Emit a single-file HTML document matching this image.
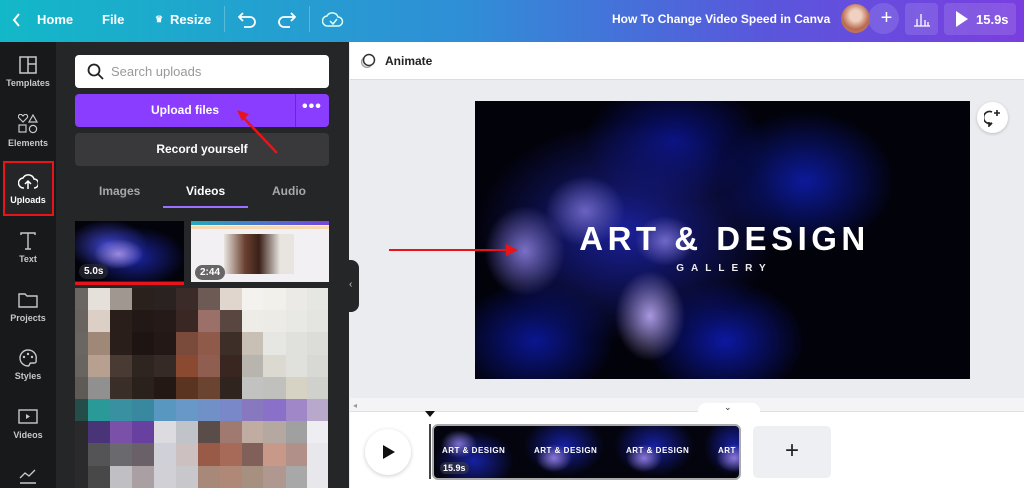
<!DOCTYPE html>
<html><head><meta charset="utf-8"><style>
*{box-sizing:border-box;margin:0;padding:0}
body{width:1024px;height:488px;overflow:hidden;font-family:"Liberation Sans",sans-serif;background:#ebecf0;position:relative}
.abs{position:absolute}
.top{left:0;top:0;width:1024px;height:42px;background:linear-gradient(90deg,#13b8c8 0%,#2f8fd6 45%,#5a56dc 75%,#7a3ee0 100%);color:#fff;font-weight:bold;font-size:13px}
.top span{position:absolute;top:12px}
.rail{left:0;top:42px;width:56px;height:446px;background:#18191b}
.ri{position:absolute;left:0;width:56px;text-align:center;color:#c8c8cc;font-size:9px;font-weight:bold}
.ri svg{display:block;margin:0 auto 4px}
.panel{left:56px;top:42px;width:293px;height:446px;background:#252627}
.mos{left:75px;top:288px;width:253px;height:200px}
.row{display:flex;height:22.2px}
.row div{height:100%}
</style></head><body>
<div class="abs top">
<svg class="abs" style="left:12px;top:12px" width="10" height="16"><path d="M7 2L2 8l5 6" stroke="#fff" stroke-width="2" fill="none"/></svg>
<span style="left:37px">Home</span><span style="left:102px">File</span>
<span style="left:155px;font-size:9px;top:14px">♛</span><span style="left:170px">Resize</span>
<div class="abs" style="left:224px;top:6px;width:1px;height:26px;background:rgba(255,255,255,.25)"></div>
<svg class="abs" style="left:238px;top:10px" width="20" height="18"><path d="M5 3L1 7l4 4M1 7h11a5 5 0 010 10H6" stroke="#fff" stroke-width="1.8" fill="none"/></svg>
<svg class="abs" style="left:276px;top:10px" width="20" height="18"><path d="M15 3l4 4-4 4M19 7H8a5 5 0 000 10h6" stroke="#fff" stroke-width="1.8" fill="none"/></svg>
<div class="abs" style="left:309px;top:6px;width:1px;height:26px;background:rgba(255,255,255,.25)"></div>
<svg class="abs" style="left:322px;top:10px" width="22" height="18"><path d="M6 16a5 5 0 01-1-10 6 6 0 0111 1 4 4 0 010 9z" stroke="#dfe" stroke-width="1.5" fill="none"/><path d="M8 11l3 3 4-5" stroke="#dfe" stroke-width="1.5" fill="none"/></svg>
<span style="left:612px;font-size:12px">How To Change Video Speed in Canva</span>
<div class="abs" style="left:868px;top:3px;width:31px;height:31px;border-radius:50%;background:rgba(255,255,255,.12);text-align:center;font-size:20px;line-height:30px;font-weight:normal;padding-left:6px">+</div>
<div class="abs" style="left:841px;top:4px;width:29px;height:29px;border-radius:50%;background:radial-gradient(circle at 50% 40%,#f0d0c0 25%,#b86a50 60%,#c88870);"></div>
<div class="abs" style="left:905px;top:3px;width:33px;height:32px;border-radius:4px;background:rgba(255,255,255,.12)"></div>
<svg class="abs" style="left:912px;top:10px" width="20" height="18"><path d="M2 16h16M5 16V9M9 16V4M13 16V10M16 16V12" stroke="#fff" stroke-width="1.3"/></svg>
<div class="abs" style="left:944px;top:3px;width:72px;height:32px;border-radius:4px;background:rgba(255,255,255,.12)"></div>
<svg class="abs" style="left:954px;top:10px" width="16" height="18"><path d="M2 1l12 8-12 8z" fill="#fff"/></svg>
<span style="left:976px">15.9s</span>
</div>
<div class="abs rail">
<div class="ri" style="top:14px"><svg width="18" height="18"><rect x="1" y="1" width="16" height="16" fill="none" stroke="#c8c8cc" stroke-width="1.5"/><path d="M9 1v16M9 8h8" stroke="#c8c8cc" stroke-width="1.5"/></svg>Templates</div>
<div class="ri" style="top:72px"><svg width="20" height="20"><path d="M5 8L1 4a2 2 0 013-3l1 1 1-1a2 2 0 013 3z" fill="none" stroke="#c8c8cc" stroke-width="1.2"/><path d="M15 1l4 7h-8z" fill="none" stroke="#c8c8cc" stroke-width="1.2"/><rect x="1" y="11" width="7" height="7" fill="none" stroke="#c8c8cc" stroke-width="1.2"/><circle cx="15" cy="15" r="3.6" fill="none" stroke="#c8c8cc" stroke-width="1.2"/></svg>Elements</div>
<div class="abs" style="left:3px;top:119px;width:51px;height:55px;border:2.5px solid #e8141a;background:#252627"></div>
<div class="ri" style="top:131px;color:#fff"><svg width="20" height="18"><path d="M6 15a5 5 0 01-1-10 6 6 0 0111 1 4 4 0 010 9" stroke="#fff" stroke-width="1.5" fill="none"/><path d="M10 16V8M7 11l3-3 3 3" stroke="#fff" stroke-width="1.5" fill="none"/></svg>Uploads</div>
<div class="ri" style="top:190px"><svg width="18" height="18"><path d="M2 3V1h14v2M9 1v16M6 17h6" stroke="#c8c8cc" stroke-width="1.4" fill="none"/></svg>Text</div>
<div class="ri" style="top:249px"><svg width="20" height="18"><path d="M1 3h6l2 2h10v11H1z" fill="none" stroke="#c8c8cc" stroke-width="1.4"/></svg>Projects</div>
<div class="ri" style="top:307px"><svg width="20" height="18"><path d="M10 1a8 8 0 100 16c2 0 1-3 3-3h3a2 2 0 002-3A8 8 0 0010 1z" fill="none" stroke="#c8c8cc" stroke-width="1.4"/><circle cx="6" cy="8" r="1.2" fill="#c8c8cc"/><circle cx="10" cy="5" r="1.2" fill="#c8c8cc"/><circle cx="14" cy="8" r="1.2" fill="#c8c8cc"/></svg>Styles</div>
<div class="ri" style="top:366px"><svg width="20" height="18"><rect x="1" y="2" width="18" height="13" fill="none" stroke="#c8c8cc" stroke-width="1.4"/><path d="M8 6l4 2.5-4 2.5z" fill="#c8c8cc"/></svg>Videos</div>
<div class="ri" style="top:424px"><svg width="20" height="18"><path d="M2 12l5-5 4 3 6-6M2 17h16" stroke="#c8c8cc" stroke-width="1.4" fill="none"/></svg></div>
</div>
<div class="abs panel"></div>
<div class="abs" style="left:75px;top:55px;width:254px;height:33px;background:#fff;border-radius:4px"></div>
<svg class="abs" style="left:87px;top:63px" width="18" height="18"><circle cx="7" cy="7" r="5.5" stroke="#222" stroke-width="1.8" fill="none"/><path d="M11 11l5 5" stroke="#222" stroke-width="1.8"/></svg>
<div class="abs" style="left:111px;top:64px;font-size:13px;color:#999">Search uploads</div>
<div class="abs" style="left:75px;top:94px;width:254px;height:33px;background:#8b3dff;border-radius:4px"></div>
<div class="abs" style="left:295px;top:94px;width:1px;height:33px;background:#6a26d0"></div>
<div class="abs" style="left:75px;top:103px;width:220px;text-align:center;color:#fff;font-weight:bold;font-size:12px">Upload files</div>
<div class="abs" style="left:302px;top:98px;color:#fff;font-weight:bold;font-size:16px;letter-spacing:1px">•••</div>
<div class="abs" style="left:75px;top:133px;width:254px;height:33px;background:#39393b;border-radius:4px;color:#fff;font-weight:bold;font-size:12px;text-align:center;line-height:33px">Record yourself</div>
<div class="abs" style="left:99px;top:184px;color:#a8a8ac;font-weight:bold;font-size:12px">Images</div>
<div class="abs" style="left:186px;top:184px;color:#fff;font-weight:bold;font-size:12px">Videos</div>
<div class="abs" style="left:272px;top:184px;color:#a8a8ac;font-weight:bold;font-size:12px">Audio</div>
<div class="abs" style="left:163px;top:206px;width:85px;height:2px;background:#9a70ff"></div>
<svg class="abs" style="left:235px;top:105px" width="45" height="50"><path d="M42 48L6 10" stroke="#e8141a" stroke-width="2.5"/><path d="M2 5l12 4-7 7z" fill="#e8141a"/></svg>
<div class="abs" style="left:75px;top:221px;width:109px;height:60px;background:radial-gradient(ellipse 25px 15px at 40% 55%,#9a8ae0,transparent),radial-gradient(ellipse 40px 25px at 30% 40%,#3a40c0,transparent),radial-gradient(ellipse 50px 30px at 55% 60%,#1a24a0,transparent),#03030c"></div>
<div class="abs" style="left:79px;top:264px;background:rgba(40,40,50,.75);color:#fff;font-size:10px;font-weight:bold;border-radius:8px;padding:2px 5px">5.0s</div>
<div class="abs" style="left:75px;top:282px;width:109px;height:3px;background:#e8141a"></div>
<div class="abs" style="left:191px;top:221px;width:138px;height:61px;background:#f2f0f2"></div>
<div class="abs" style="left:191px;top:221px;width:138px;height:4px;background:linear-gradient(90deg,#2ab,#74d)"></div>
<div class="abs" style="left:191px;top:226px;width:138px;height:3px;background:#f8d8b0"></div>
<div class="abs" style="left:224px;top:234px;width:70px;height:40px;background:linear-gradient(90deg,#e8e4e0 0%,#6a4030 30%,#3a2018 50%,#e8e4e0 80%)"></div>
<div class="abs" style="left:195px;top:265px;background:#666;color:#fff;font-size:10px;font-weight:bold;border-radius:8px;padding:2px 5px">2:44</div>
<div class="abs mos">
<div class="row"><div style="width:13px;background:#6a6662"></div><div style="width:22px;background:#e6e0da"></div><div style="width:22px;background:#a09890"></div><div style="width:22px;background:#2a201c"></div><div style="width:22px;background:#2a2220"></div><div style="width:22px;background:#3a2a28"></div><div style="width:22px;background:#6e5a55"></div><div style="width:22px;background:#e0d6ce"></div><div style="width:21px;background:#f4f2ee"></div><div style="width:23px;background:#f2f0ea"></div><div style="width:21px;background:#eceae6"></div><div style="width:21px;background:#e6e6e2"></div></div>
<div class="row"><div style="width:13px;background:#6a6460"></div><div style="width:22px;background:#dcd0c6"></div><div style="width:22px;background:#2a1e1a"></div><div style="width:22px;background:#221816"></div><div style="width:22px;background:#261a18"></div><div style="width:22px;background:#3a2622"></div><div style="width:22px;background:#9a7068"></div><div style="width:22px;background:#5a4640"></div><div style="width:21px;background:#eeece6"></div><div style="width:23px;background:#ecebe6"></div><div style="width:21px;background:#e8e8e4"></div><div style="width:21px;background:#e4e4e0"></div></div>
<div class="row"><div style="width:13px;background:#6a6662"></div><div style="width:22px;background:#a08878"></div><div style="width:22px;background:#2a1e1a"></div><div style="width:22px;background:#1e1412"></div><div style="width:22px;background:#241816"></div><div style="width:22px;background:#7a4a3a"></div><div style="width:22px;background:#905a4a"></div><div style="width:22px;background:#3e2e28"></div><div style="width:21px;background:#c8c0b4"></div><div style="width:23px;background:#e6e6e2"></div><div style="width:21px;background:#e0e0dc"></div><div style="width:21px;background:#dcdcd8"></div></div>
<div class="row"><div style="width:13px;background:#686460"></div><div style="width:22px;background:#b8a090"></div><div style="width:22px;background:#4a3a34"></div><div style="width:22px;background:#2e2420"></div><div style="width:22px;background:#362a26"></div><div style="width:22px;background:#8a4a32"></div><div style="width:22px;background:#905e50"></div><div style="width:22px;background:#3a2620"></div><div style="width:21px;background:#b8b4ae"></div><div style="width:23px;background:#dcdad0"></div><div style="width:21px;background:#e0e0dc"></div><div style="width:21px;background:#d8d8d4"></div></div>
<div class="row"><div style="width:13px;background:#5e5a56"></div><div style="width:22px;background:#909090"></div><div style="width:22px;background:#3a2e28"></div><div style="width:22px;background:#2a201c"></div><div style="width:22px;background:#241814"></div><div style="width:22px;background:#5a3420"></div><div style="width:22px;background:#6a4430"></div><div style="width:22px;background:#30241e"></div><div style="width:21px;background:#c2c2c0"></div><div style="width:23px;background:#c0c0bc"></div><div style="width:21px;background:#d6d2c4"></div><div style="width:21px;background:#d0d0cc"></div></div>
<div class="row"><div style="width:13px;background:#244c48"></div><div style="width:22px;background:#2a9a98"></div><div style="width:22px;background:#3890a0"></div><div style="width:22px;background:#3888a0"></div><div style="width:22px;background:#5898c0"></div><div style="width:22px;background:#6898c8"></div><div style="width:22px;background:#7090c8"></div><div style="width:22px;background:#7888c8"></div><div style="width:21px;background:#8878c0"></div><div style="width:23px;background:#8a70c8"></div><div style="width:21px;background:#a088c8"></div><div style="width:21px;background:#b8a8cc"></div></div>
<div class="row"><div style="width:13px;background:#2a2a2c"></div><div style="width:22px;background:#4a3478"></div><div style="width:22px;background:#7a50a8"></div><div style="width:22px;background:#6840a0"></div><div style="width:22px;background:#dcdce0"></div><div style="width:22px;background:#c0c4c8"></div><div style="width:22px;background:#5a4c48"></div><div style="width:22px;background:#a07a70"></div><div style="width:21px;background:#c0aca0"></div><div style="width:23px;background:#b4a8a0"></div><div style="width:21px;background:#a0a0a0"></div><div style="width:21px;background:#eeeef2"></div></div>
<div class="row"><div style="width:13px;background:#2a2a2c"></div><div style="width:22px;background:#545456"></div><div style="width:22px;background:#6a6a6e"></div><div style="width:22px;background:#6a6068"></div><div style="width:22px;background:#d0d0d8"></div><div style="width:22px;background:#ccc0c0"></div><div style="width:22px;background:#9a5a48"></div><div style="width:22px;background:#a86a58"></div><div style="width:21px;background:#806058"></div><div style="width:23px;background:#c89888"></div><div style="width:21px;background:#b09088"></div><div style="width:21px;background:#e8e8ec"></div></div>
<div class="row"><div style="width:13px;background:#2a2a2c"></div><div style="width:22px;background:#484848"></div><div style="width:22px;background:#c0c0c4"></div><div style="width:22px;background:#aaa0a4"></div><div style="width:22px;background:#d0d0d6"></div><div style="width:22px;background:#c8c8cc"></div><div style="width:22px;background:#a88878"></div><div style="width:22px;background:#b08878"></div><div style="width:21px;background:#a89080"></div><div style="width:23px;background:#b09890"></div><div style="width:21px;background:#a8a8a8"></div><div style="width:21px;background:#e8e8ec"></div></div>
</div>
<div class="abs" style="left:347px;top:260px;width:12px;height:52px;background:#252627;border-radius:0 8px 8px 0"></div>
<div class="abs" style="left:349px;top:279px;color:#ccc;font-size:10px">‹</div>
<div class="abs" style="left:350px;top:42px;width:674px;height:38px;background:#fff;border-bottom:1px solid #dcdde2"></div>
<svg class="abs" style="left:360px;top:52px" width="18" height="18"><circle cx="7" cy="10" r="5.5" fill="#ddd" stroke="#999"/><circle cx="9" cy="8" r="5.5" fill="#fff" stroke="#333" stroke-width="1.5"/></svg>
<div class="abs" style="left:385px;top:54px;font-size:12px;font-weight:bold;color:#222">Animate</div>
<div class="abs" style="left:475px;top:101px;width:495px;height:278px;background:
radial-gradient(ellipse 35px 45px at 175px 215px,#a898e0,transparent),
radial-gradient(ellipse 40px 45px at 50px 150px,#7a70c8,transparent),
radial-gradient(ellipse 40px 35px at 110px 110px,#6a64c0,transparent),
radial-gradient(ellipse 30px 25px at 190px 140px,#7068c8,transparent),
radial-gradient(ellipse 90px 70px at 330px 80px,#0c1a9a,transparent),
radial-gradient(ellipse 80px 60px at 250px 240px,#0c18a0,transparent),
radial-gradient(ellipse 80px 60px at 60px 240px,#0a1690,transparent),
radial-gradient(ellipse 150px 110px at 150px 130px,#1a2098,transparent),
radial-gradient(ellipse 90px 60px at 200px 40px,#0a1280,transparent),
#02020a"></div>
<div class="abs" style="left:475px;top:220px;width:495px;text-align:center;color:#fff;font-weight:bold;font-size:33px;letter-spacing:4.5px;padding-left:4px">ART &amp; DESIGN</div>
<div class="abs" style="left:475px;top:263px;width:495px;text-align:center;color:#eee;font-weight:bold;font-size:10px;letter-spacing:7px;padding-left:4px">GALLERY</div>
<svg class="abs" style="left:388px;top:240px" width="140" height="20"><path d="M1 10h125" stroke="#e8141a" stroke-width="2"/><path d="M118 4l12 6-12 6z" fill="#e8141a"/></svg>
<div class="abs" style="left:977px;top:102px;width:31px;height:31px;border-radius:50%;background:#fff;box-shadow:0 1px 3px rgba(0,0,0,.2)"></div>
<svg class="abs" style="left:984px;top:109px" width="18" height="18"><path d="M8 3a6 6 0 100 11l-3 3v-4" stroke="#222" stroke-width="1.6" fill="none"/><path d="M13 1v6M10 4h6" stroke="#222" stroke-width="1.6"/></svg>
<div class="abs" style="left:350px;top:398px;width:674px;height:13px;background:#f4f4f6"></div>
<div class="abs" style="left:353px;top:401px;color:#999;font-size:8px">◂</div>
<div class="abs" style="left:350px;top:411px;width:674px;height:77px;background:#fff;border-top:1px solid #e0e0e4"></div>
<div class="abs" style="left:698px;top:403px;width:62px;height:10px;background:#fff;border-radius:8px 8px 0 0"></div>
<div class="abs" style="left:724px;top:402px;font-size:9px;color:#333">⌄</div>
<div class="abs" style="left:365px;top:429px;width:46px;height:46px;border-radius:50%;background:#fff;box-shadow:0 1px 4px rgba(0,0,0,.2)"></div>
<svg class="abs" style="left:382px;top:444px" width="14" height="16"><path d="M1 1l12 7-12 7z" fill="#111"/></svg>
<svg class="abs" style="left:424px;top:409px" width="12" height="10"><path d="M1 2h10L6 8z" fill="#111"/></svg>
<div class="abs" style="left:429px;top:424px;width:2px;height:55px;background:#444"></div>
<div class="abs" style="left:432px;top:424px;width:309px;height:56px;border:2px solid #aaa;border-radius:6px;overflow:hidden;background:
radial-gradient(ellipse 18px 14px at 25px 18px,#7a70d0,transparent),radial-gradient(ellipse 18px 14px at 120px 32px,#8a78d8,transparent),radial-gradient(ellipse 18px 14px at 210px 32px,#8a78d8,transparent),radial-gradient(ellipse 18px 14px at 300px 32px,#8a78d8,transparent),
radial-gradient(ellipse 40px 30px at 40px 35px,#1620a0,transparent),radial-gradient(ellipse 40px 30px at 130px 20px,#1620a0,transparent),radial-gradient(ellipse 40px 30px at 220px 20px,#1620a0,transparent),radial-gradient(ellipse 30px 30px at 300px 20px,#1620a0,transparent),
#04040e">
<div class="abs" style="left:8px;top:20px;color:#fff;font-size:8px;font-weight:bold;letter-spacing:.5px">ART &amp; DESIGN</div>
<div class="abs" style="left:100px;top:20px;color:#fff;font-size:8px;font-weight:bold;letter-spacing:.5px">ART &amp; DESIGN</div>
<div class="abs" style="left:192px;top:20px;color:#fff;font-size:8px;font-weight:bold;letter-spacing:.5px">ART &amp; DESIGN</div>
<div class="abs" style="left:284px;top:20px;color:#fff;font-size:8px;font-weight:bold;letter-spacing:.5px">ART</div>
<div class="abs" style="left:6px;top:36px;color:#fff;font-size:9px;font-weight:bold;background:rgba(60,60,70,.6);border-radius:6px;padding:1px 3px">15.9s</div>
</div>
<div class="abs" style="left:753px;top:426px;width:78px;height:52px;background:#eeeff2;border-radius:5px;text-align:center;line-height:50px;font-size:24px;color:#222">+</div>
</body></html>
